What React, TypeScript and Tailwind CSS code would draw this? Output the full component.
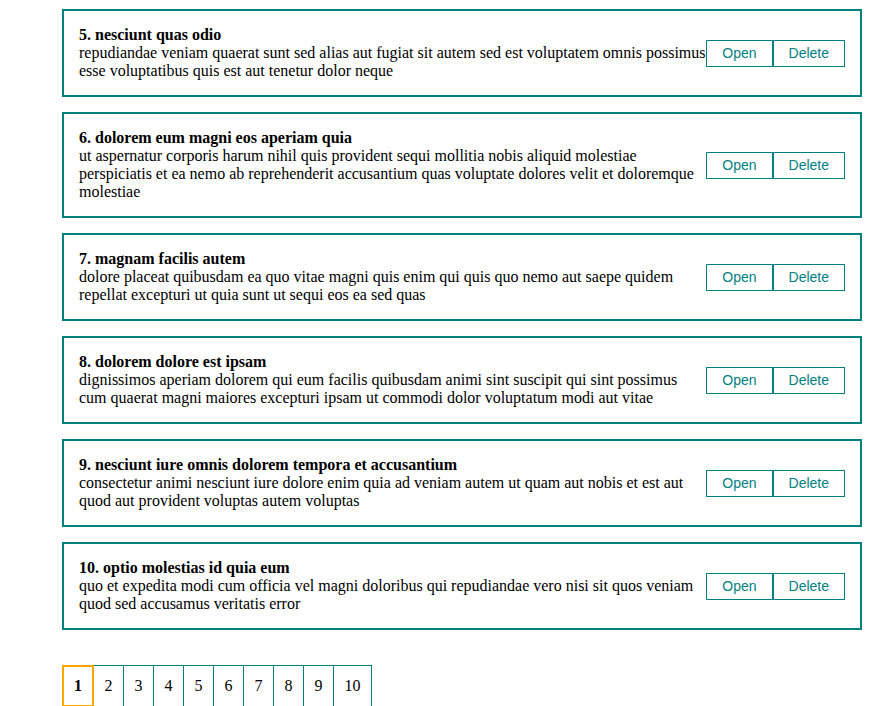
const posts = [
  {
    id: 5,
    title: "nesciunt quas odio",
    body: "repudiandae veniam quaerat sunt sed alias aut fugiat sit autem sed est voluptatem omnis possimus esse voluptatibus quis est aut tenetur dolor neque",
  },
  {
    id: 6,
    title: "dolorem eum magni eos aperiam quia",
    body: "ut aspernatur corporis harum nihil quis provident sequi mollitia nobis aliquid molestiae perspiciatis et ea nemo ab reprehenderit accusantium quas voluptate dolores velit et doloremque molestiae",
  },
  {
    id: 7,
    title: "magnam facilis autem",
    body: "dolore placeat quibusdam ea quo vitae magni quis enim qui quis quo nemo aut saepe quidem repellat excepturi ut quia sunt ut sequi eos ea sed quas",
  },
  {
    id: 8,
    title: "dolorem dolore est ipsam",
    body: "dignissimos aperiam dolorem qui eum facilis quibusdam animi sint suscipit qui sint possimus cum quaerat magni maiores excepturi ipsam ut commodi dolor voluptatum modi aut vitae",
  },
  {
    id: 9,
    title: "nesciunt iure omnis dolorem tempora et accusantium",
    body: "consectetur animi nesciunt iure dolore enim quia ad veniam autem ut quam aut nobis et est aut quod aut provident voluptas autem voluptas",
  },
  {
    id: 10,
    title: "optio molestias id quia eum",
    body: "quo et expedita modi cum officia vel magni doloribus qui repudiandae vero nisi sit quos veniam quod sed accusamus veritatis error",
  },
];

const pages = [1, 2, 3, 4, 5, 6, 7, 8, 9, 10];

const PostItem = ({ post }: { post: (typeof posts)[number] }) => (
  <div className="flex items-center border-2 border-[#008080] p-[15px] mb-[15px]">
    <div className="flex-1 min-w-0 leading-[18px]">
      <strong>
        {post.id}. {post.title}
      </strong>
      <div>{post.body}</div>
    </div>
    <div className="flex shrink-0 font-['Liberation_Sans',Arial,sans-serif] text-sm text-[#008080]">
      <button className="h-[27px] px-[15px] border border-[#008080] bg-white">
        Open
      </button>
      <button className="h-[27px] px-[15px] border border-[#008080] bg-white">
        Delete
      </button>
    </div>
  </div>
);

export default function App() {
  return (
    <div className="min-h-screen bg-white text-black text-base font-['Liberation_Serif','Times_New_Roman',serif]">
      <div className="w-[800px] ml-[62px] pt-[9px]">
        {posts.map((post) => (
          <PostItem key={post.id} post={post} />
        ))}
        <div className="flex mt-[35px]">
          {pages.map((p) =>
            p === 1 ? (
              <span
                key={p}
                className="w-[32px] text-center font-bold py-[10px] leading-[18px] border-2 border-[#ffa500] cursor-pointer"
              >
                {p}
              </span>
            ) : (
              <span
                key={p}
                className="px-[10.5px] py-[11px] leading-[18px] border-y border-r border-[#008080] cursor-pointer"
              >
                {p}
              </span>
            )
          )}
        </div>
      </div>
    </div>
  );
}
